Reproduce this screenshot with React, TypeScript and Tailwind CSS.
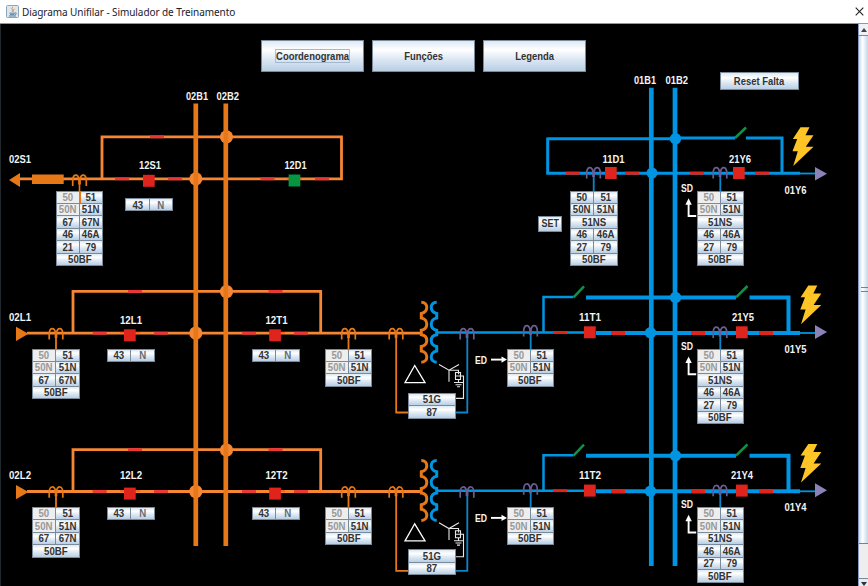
import React from "react";

const TOP = 24;
const LINE = "#f58634";
const BUS = "#e77817";
const BLUE = "#0095e2";
const RED = "#de241c";
const DASH = "#ef3338";
const PURPLE = "#6b5d94";

const face =
  "bg-[linear-gradient(to_bottom,#dde8f3_0%,#ffffff_30%,#dde8f3_60%,#b8cfe5_100%)]";

type Row = string[];

function Relay({ x, y, rows }: { x: number; y: number; rows: Row[] }) {
  return (
    <div
      className="absolute flex w-[47.5px] flex-col gap-px bg-[#7a8a99] p-px"
      style={{ left: x, top: y - TOP, height: rows.length * 12.55 + 0.5 }}
    >
      {rows.map((row, i) => (
        <div key={i} className="flex min-h-0 flex-1 gap-px">
          {row.map((c) => {
            const off = c.startsWith("-");
            return (
              <div
                key={c}
                className={`flex min-w-0 flex-1 items-center justify-center whitespace-nowrap leading-none ${
                  off ? "bg-[#eeeeee] text-[#999999]" : face
                } ${c === "N" ? "text-[#666a70]" : ""}`}
              >
                <span className="inline-block scale-x-[.92]">{off ? c.slice(1) : c}</span>
              </div>
            );
          })}
        </div>
      ))}
    </div>
  );
}

const BASE: Row[] = [["-50", "51"], ["-50N", "51N"]];
const INPUT: Row[] = [...BASE, ["67", "67N"], ["50BF"]];
const SIDE: Row[] = [...BASE, ["50BF"]];
const OUT: Row[] = [...BASE, ["51NS"], ["46", "46A"], ["27", "79"], ["50BF"]];
const SWITCH: Row[] = [["43", "N"]];

const relays: { x: number; y: number; rows: Row[] }[] = [
  { x: 55.7, y: 190.5, rows: [...BASE, ["67", "67N"], ["46", "46A"], ["21", "79"], ["50BF"]] },
  { x: 125.3, y: 198.3, rows: SWITCH },
  { x: 570, y: 190.5, rows: [["50", "51"], ["50N", "51N"], ...OUT.slice(2)] },
  { x: 696.5, y: 190.5, rows: OUT },
  ...[348.5, 507].flatMap((y, i) => [
    { x: 32, y, rows: INPUT },
    { x: 107.2, y: y - i * 0.5, rows: SWITCH },
    { x: 252, y: y - i * 0.5, rows: SWITCH },
    { x: 324.7, y, rows: SIDE },
    { x: 408, y: i ? 549.3 : 393, rows: [["51G"], ["87"]] },
    { x: 506.5, y, rows: SIDE },
    { x: 696.5, y, rows: OUT },
  ]),
];

function CT({ x, y, color }: { x: number; y: number; color: string }) {
  return (
    <path
      d={`M${x - 6.8} ${y + 11.5}v-5c0-7.5 5.3-7.500 6.300-1.500v5M${x + 0.5} ${y + 10}v-5c1-6 6.300-6 6.300 1.500v5`}
      fill="none"
      stroke={color}
      strokeWidth="1.7"
    />
  );
}

function Dashes({ xs, y, color, h = 2.8 }: { xs: number[]; y: number; color: string; h?: number }) {
  return (
    <>
      {xs.map((x) => (
        <rect key={x} x={x} y={y - h / 2} width="14" height={h} fill={color} />
      ))}
    </>
  );
}

function Breaker({ x, y, color = RED }: { x: number; y: number; color?: string }) {
  return <rect x={x} y={y} width="11.7" height="12" fill={color} />;
}

function Bolt({ x, y }: { x: number; y: number }) {
  return (
    <path
      transform={`translate(${x} ${y})`}
      d="M8 0h9l-4 8h8l-7.7 11.5h7.7L.7 38.7 5.3 24H0l4.7-12.3H.3z"
      fill="#ffc425"
    />
  );
}

function Label({ x, y, w = 22, children }: { x: number; y: number; w?: number; children: string }) {
  return (
    <text x={x} y={y} textLength={w} lengthAdjust="spacingAndGlyphs" fill="#f4f4f4">
      {children}
    </text>
  );
}

function SdArrow({ y }: { y: number }) {
  return (
    <g>
      <path d={`M688.6 ${y + 4}v13.2h7.6`} fill="none" stroke="#fff" strokeWidth="1.9" />
      <path d={`M685.4 ${y + 6}l3.200-6.500 3.200 6.500z`} fill="#fff" />
      <Label x={681} y={y - 7} w={12}>SD</Label>
    </g>
  );
}

function Bay() {
  return (
    <g fill="none">
      <path d="M27 333.2H422M73 333V291.4H320.7V333" stroke={LINE} strokeWidth="2.8" />
      <path d="M16 326.7L28.5 333.7 16 341z" fill={BUS} />
      <Dashes xs={[128, 268.5]} y={291.4} color={DASH} />
      <Dashes xs={[92.7, 154, 242, 294]} y={333.2} color={DASH} />
      <path d="M120 332.7h20M281 332.7h4" stroke="#ff5a10" strokeWidth="1.6" />
      <path d="M56 332v17M348.5 332v17M396.2 332V412.5H408" stroke={BUS} strokeWidth="1.8" />
      <CT x={56} y={328} color={BUS} />
      <CT x={348.5} y={328} color={BUS} />
      <CT x={396} y={328} color={BUS} />
      <Breaker x={124} y={329.3} />
      <Breaker x={269.2} y={329.3} />
      <path
        d="M421.3 302.2c7.3 0 7.3 10 0 11.300v4.500c7.300 1 7.300 11 0 12.300v4.500c7.300 1 7.300 10.500 0 11.700v4.500c7.300 1 7.300 11 0 11.300"
        stroke={BUS}
        strokeWidth="3"
      />
      <path
        d="M436.7 302.2c-7.3 0-7.3 10 0 11.300v4.500c-7.300 1-7.300 11 0 12.300v4.500c-7.300 1-7.300 10.500 0 11.700v4.500c-7.300 1-7.300 11 0 11.300"
        stroke={BLUE}
        strokeWidth="3"
      />
      <path d="M437 332.4H584M543.5 333V297H573.5" stroke={BLUE} strokeWidth="2.5" />
      <path d="M467.3 333V412.5H455M530.7 333V349M720.3 333V349" stroke="#0a85cc" strokeWidth="1.8" />
      <path d="M414.7 365.5L405 382.6H425z" stroke="#fff" strokeWidth="1.3" />
      <path
        d="M439 364.5l10 5.700 10-5.700M449 370.200v11.500M449 370.200h9.500v4M455.500 372.500h5v7h-5zM455.500 376h8v22.400H455M458.500 379.500v3M454 382.500h9M455.500 384.700h6M457 386.800h3"
        stroke="#e8e8e8"
        strokeWidth="1.1"
      />
      <path d="M491 359.6h12" stroke="#fff" strokeWidth="1.9" />
      <path d="M501.500 356.400l5.500 3.200-5.500 3.200z" fill="#fff" />
      <Label x={475} y={363.8} w={12}>ED</Label>
      <path d="M596 333H800M586 297.500H736M749.500 297.500H788.500V333" stroke={BLUE} strokeWidth="4" />
      <path d="M800 333H816" stroke={BLUE} strokeWidth="1.8" />
      <path d="M573.500 297.300l10.500-11M736 297.300l11.500-11.300" stroke="#0c9347" strokeWidth="2.5" />
      <Dashes xs={[553]} y={332.4} color={RED} />
      <Dashes xs={[611, 691, 759]} y={333} color={RED} h={4} />
      <CT x={467} y={328} color={PURPLE} />
      <CT x={530.5} y={325} color={PURPLE} />
      <CT x={720} y={326.500} color={PURPLE} />
      <Breaker x={584} y={326.3} />
      <Breaker x={736} y={326.3} />
      <path d="M815 325l12 7-12 7z" fill="#8c82b8" />
      <Bolt x={800.3} y={285.6} />
      <SdArrow y={357} />
    </g>
  );
}

function Diagram() {
  return (
    <svg className="absolute inset-0 h-full w-full" viewBox="0 24 858 562" fontSize="10.6">
      <g fill="none">
        <path d="M20 178.8H341.5V136.8H102V178.8" stroke={LINE} strokeWidth="2.8" />
        <path d="M9 180l11-7v14z" fill={BUS} />
        <rect x="32" y="174.5" width="31.7" height="9.5" fill={BUS} />
        <Dashes xs={[150]} y={136.8} color={DASH} />
        <Dashes xs={[115, 168, 260.5, 315]} y={178.8} color={DASH} />
        <CT x={79.5} y={174.5} color={BUS} />
        <path d="M79.5 178V191" stroke={BUS} strokeWidth="1.6" />
        <Breaker x={143} y={174.8} />
        <path d="M287 178.5h15" stroke="#ff5a10" strokeWidth="1.6" />
        <Breaker x={288.6} y={174.5} color="#069643" />

        <path
          d="M547.7 138.8H675M547.7 137.5V173.2H800M677 138H735M746 138H782V173"
          stroke={BLUE}
          strokeWidth="3"
        />
        <path d="M800 173.5H816" stroke={BLUE} strokeWidth="1.8" />
        <path d="M735 138l11-10.5" stroke="#0c9347" strokeWidth="2.5" />
        <Dashes xs={[566, 625, 690, 755]} y={173.2} color={RED} h={3} />
        <path d="M593.7 174V191M720.3 174V191" stroke="#0a85cc" strokeWidth="1.8" />
        <CT x={593.5} y={167} color={PURPLE} />
        <CT x={720} y={167} color={PURPLE} />
        <Breaker x={605} y={167} />
        <Breaker x={733} y={167} />
        <path d="M815 167l12 6.800-12 6.800z" fill="#8c82b8" />
        <Bolt x={792.5} y={127.3} />
        <SdArrow y={198.8} />
      </g>
      <Bay />
      <g transform="translate(0 158.3)">
        <Bay />
      </g>
      <g fill={LINE}>
        {[178.8, 333, 491.5].map((y) => <circle key={y} cx="195.8" cy={y} r="6.6" />)}
        {[136.8, 291.5, 450].map((y) => <circle key={y} cx="226.5" cy={y} r="6.6" />)}
      </g>
      <g fill={BLUE}>
        <circle cx="652" cy="173" r="5.5" />
        <circle cx="650.5" cy="332.8" r="5.7" />
        <circle cx="650.5" cy="491.2" r="5.7" />
        {[138.8, 297.5, 455.7].map((y) => <circle key={y} cx="675.5" cy={y} r="5.7" />)}
      </g>
      <path d="M195.8 103.5V546M225.8 103.5V546" stroke={BUS} strokeWidth="4.7" />
      <path d="M651.3 87.7V566M675 87.7V566" stroke={BLUE} strokeWidth="4.7" />
      <Label x={186} y={99.7}>02B1</Label>
      <Label x={216.5} y={99.7} w={22.5}>02B2</Label>
      <Label x={634} y={83.8}>01B1</Label>
      <Label x={665.5} y={83.8} w={22.5}>01B2</Label>
      <Label x={9} y={162.8}>02S1</Label>
      <Label x={139} y={169.3}>12S1</Label>
      <Label x={284.5} y={169.3}>12D1</Label>
      <Label x={602.5} y={162.8}>11D1</Label>
      <Label x={729} y={162.8}>21Y6</Label>
      <Label x={784.5} y={194.3}>01Y6</Label>
      <Label x={9} y={321}>02L1</Label>
      <Label x={120} y={324.2}>12L1</Label>
      <Label x={265.5} y={324.2}>12T1</Label>
      <Label x={579} y={321}>11T1</Label>
      <Label x={732} y={321}>21Y5</Label>
      <Label x={784.5} y={352.7}>01Y5</Label>
      <Label x={9} y={479.3}>02L2</Label>
      <Label x={120} y={479.3}>12L2</Label>
      <Label x={265.5} y={479.3}>12T2</Label>
      <Label x={579} y={479.3}>11T2</Label>
      <Label x={731} y={479.3}>21Y4</Label>
      <Label x={784.5} y={510.8}>01Y4</Label>
    </svg>
  );
}

const buttonBase = `flex items-center justify-center border border-[#7a8a99] leading-none ${face}`;

export default function App() {
  return (
    <div className="flex h-screen w-screen flex-col overflow-hidden bg-white font-['Liberation_Sans',Arial,sans-serif]">
      <header className="flex h-6 shrink-0 items-center border-b border-[#8c9aa3] pl-1.5 pr-1">
        <svg width="13" height="13" viewBox="0 0 13 13">
          <rect x=".5" y=".5" width="12" height="12" rx="1" fill="#dce6ee" stroke="#8fa4b4" />
          <path d="M7 2C4 4 8 5 6 7M8.500 4C6 5.500 8 6 7 7" fill="none" stroke="#e8853a" />
          <path d="M3.500 8.200h5.500M4 9.700h4.500M3 11h7M9 8c2-.5 1.500 1.500 0 1.700" fill="none" stroke="#5382a1" />
        </svg>
        <h1 className="ml-[3px] whitespace-nowrap font-['Noto_Sans','Open_Sans',sans-serif] text-[10px] leading-none tracking-[-0.075px] text-[#20202c]">
          Diagrama Unifilar - Simulador de Treinamento
        </h1>
        <svg className="ml-auto" width="9" height="9" viewBox="0 0 9 9">
          <path d="M.7.7l7.600 7.600M8.300.7L.7 8.300" stroke="#222" strokeWidth="1.1" />
        </svg>
      </header>
      <div className="flex min-h-0 flex-1">
        <main className="relative w-[858px] shrink-0 overflow-hidden border-l border-[#20282e] bg-black text-[10.5px] font-bold text-[#333333]">
          <div className="absolute inset-y-0 -left-px w-[858px]">
            <Diagram />
            {relays.map((r, i) => (
              <Relay key={i} {...r} />
            ))}
            <div className="absolute left-[79px] top-[167px] h-3 w-[1.5px] bg-[#e77817]" />
            <nav className="absolute left-[261px] top-4 flex gap-2">
              <button className={`${buttonBase} h-8 w-[103px]`}>
                <span className="inline-block scale-x-[.9] border border-[#a3b8cc] py-px">Coordenograma</span>
              </button>
              <button className={`${buttonBase} h-8 w-[103px]`}>
                <span className="inline-block scale-x-[.9]">Funções</span>
              </button>
              <button className={`${buttonBase} h-8 w-[103px]`}>
                <span className="inline-block scale-x-[.9]">Legenda</span>
              </button>
            </nav>
            <button className={`${buttonBase} absolute left-[720px] top-12 h-[18px] w-[79px]`}>
              <span className="inline-block scale-x-[.9]">Reset Falta</span>
            </button>
            <button className={`${buttonBase} absolute left-[538px] top-[191.5px] h-4 w-6`}>
              <span className="inline-block scale-x-[.85]">SET</span>
            </button>
          </div>
        </main>
        <aside className="flex min-w-0 flex-1 flex-col border-l border-[#8a9bc4] bg-[#eeeeee]">
          <div className="flex h-3 items-center justify-center border-b border-[#7a8a99] bg-[#eef2f7]">
            <svg width="6" height="4" viewBox="0 0 6 4"><path d="M0 4l3-4 3 4z" fill="#444" /></svg>
          </div>
          <div className="flex h-[508px] flex-col justify-center border-b border-[#6382bf] bg-[linear-gradient(to_right,#c8daee,#ffffff_40%,#c3d6ea)]">
            <div className="ml-0.5 h-[5px] border-y border-[#6382bf]" />
          </div>
          <div className="flex-1" />
          <div className="flex h-2 items-end justify-center border-t border-[#7a8a99] bg-[#e4ebf2]">
            <svg width="6" height="4" viewBox="0 0 6 4"><path d="M0 0h6L3 4z" fill="#333" /></svg>
          </div>
        </aside>
      </div>
    </div>
  );
}
